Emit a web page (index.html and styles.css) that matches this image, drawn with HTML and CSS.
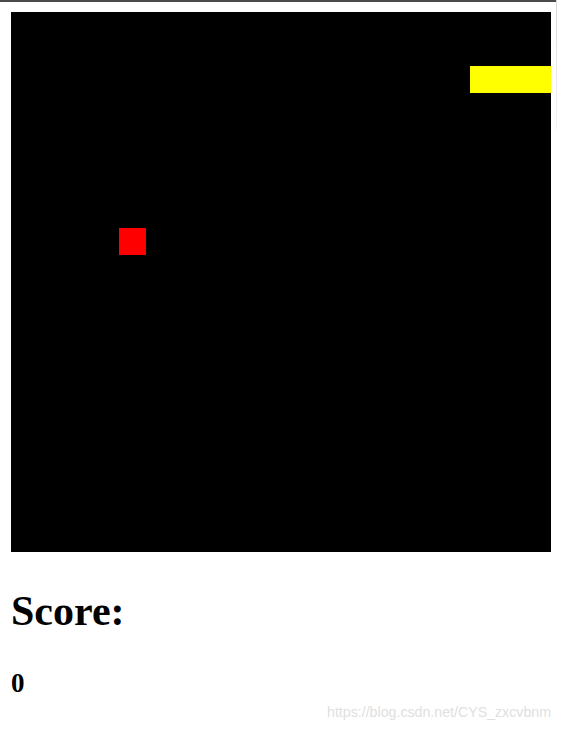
FILE: index.html
```html
<!DOCTYPE html>
<html>
<head>
<meta charset="utf-8">
<title>Snake</title>
<link rel="stylesheet" href="styles.css">
</head>
<body>
<div class="topline"></div>
<div class="edge"></div>
<main class="page">
  <div class="board">
    <div class="cell snake" style="grid-column: 18 / span 3; grid-row: 3;"></div>
    <div class="cell food" style="grid-column: 5; grid-row: 9;"></div>
  </div>
  <h1 class="title">Score:</h1>
  <h2 class="score">0</h2>
</main>
<div class="watermark">https://blog.csdn.net/CYS_zxcvbnm</div>
</body>
</html>
```
FILE: styles.css
```css
html, body {
  margin: 0;
  padding: 0;
  background: #fff;
  height: 100%;
  overflow: hidden;
}
body {
  position: relative;
  font-family: "Liberation Serif", "Times New Roman", serif;
  color: #000;
}
.topline {
  width: 556px;
  height: 2px;
  background: #4a4a4a;
}
.edge {
  position: absolute;
  left: 556px;
  top: 0;
  width: 1px;
  height: 130px;
  background: linear-gradient(#d8d8d8, #f4f4f4);
}
.page {
  padding: 10px 0 0 11px;
}
.board {
  width: 540px;
  height: 540px;
  background: #000;
  display: grid;
  grid-template-columns: repeat(20, 27px);
  grid-template-rows: repeat(20, 27px);
}
.snake {
  background: #ffff00;
}
.food {
  background: #ff0000;
}
.title {
  margin: 35px 0 0 0;
  font-size: 42px;
  font-weight: bold;
  line-height: normal;
}
.score {
  margin: 33px 0 0 0;
  font-size: 27px;
  font-weight: bold;
  line-height: normal;
}
.watermark {
  position: absolute;
  right: 12px;
  top: 704px;
  font-family: "Liberation Sans", Arial, sans-serif;
  font-size: 14.2px;
  color: #e0e0e0;
}
```
